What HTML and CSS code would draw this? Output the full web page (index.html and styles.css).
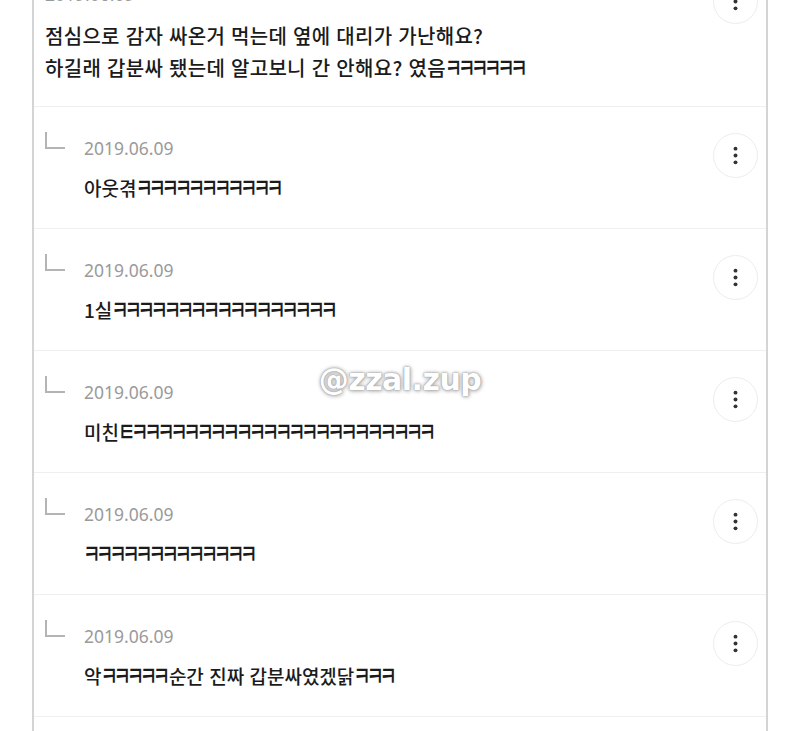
FILE: index.html
```html
<!DOCTYPE html>
<html lang="ko">
<head>
<meta charset="UTF-8" />
<meta name="viewport" content="width=device-width, initial-scale=1" />
<title>댓글</title>
<link rel="stylesheet" href="styles.css">
</head>
<body>

<div class="comments">
  <div class="row parent">
    <div class="body">
      <div class="date">2019.06.09</div>
      <p class="text big">점심으로 감자 싸온거 먹는데 옆에 대리가 가난해요?<br>하길래 갑분싸 됐는데 알고보니 간 안해요? 였음<span class="k">ㅋㅋㅋㅋㅋㅋ</span></p>
    </div>
    <button class="more"><svg viewBox="0 0 44 44"><circle cx="22" cy="15" r="2"/><circle cx="22" cy="22" r="2"/><circle cx="22" cy="29" r="2"/></svg></button>
  </div>

  <div class="row reply">
    <svg class="corner" viewBox="0 0 20 18"><path d="M1 0 V16 H20"/></svg>
    <div class="body">
      <div class="date">2019.06.09</div>
      <p class="text">아웃겪<span class="k">ㅋㅋㅋㅋㅋㅋㅋㅋㅋㅋㅋ</span></p>
    </div>
    <button class="more"><svg viewBox="0 0 44 44"><circle cx="22" cy="15" r="2"/><circle cx="22" cy="22" r="2"/><circle cx="22" cy="29" r="2"/></svg></button>
  </div>

  <div class="row reply">
    <svg class="corner" viewBox="0 0 20 18"><path d="M1 0 V16 H20"/></svg>
    <div class="body">
      <div class="date">2019.06.09</div>
      <p class="text">1실<span class="k">ㅋㅋㅋㅋㅋㅋㅋㅋㅋㅋㅋㅋㅋㅋㅋㅋㅋ</span></p>
    </div>
    <button class="more"><svg viewBox="0 0 44 44"><circle cx="22" cy="15" r="2"/><circle cx="22" cy="22" r="2"/><circle cx="22" cy="29" r="2"/></svg></button>
  </div>

  <div class="row reply">
    <svg class="corner" viewBox="0 0 20 18"><path d="M1 0 V16 H20"/></svg>
    <div class="body">
      <div class="date">2019.06.09</div>
      <p class="text">미친<span class="k">ㅌㅋㅋㅋㅋㅋㅋㅋㅋㅋㅋㅋㅋㅋㅋㅋㅋㅋㅋㅋㅋㅋㅋㅋ</span></p>
    </div>
    <button class="more"><svg viewBox="0 0 44 44"><circle cx="22" cy="15" r="2"/><circle cx="22" cy="22" r="2"/><circle cx="22" cy="29" r="2"/></svg></button>
  </div>

  <div class="row reply">
    <svg class="corner" viewBox="0 0 20 18"><path d="M1 0 V16 H20"/></svg>
    <div class="body">
      <div class="date">2019.06.09</div>
      <p class="text"><span class="k">ㅋㅋㅋㅋㅋㅋㅋㅋㅋㅋㅋㅋㅋ</span></p>
    </div>
    <button class="more"><svg viewBox="0 0 44 44"><circle cx="22" cy="15" r="2"/><circle cx="22" cy="22" r="2"/><circle cx="22" cy="29" r="2"/></svg></button>
  </div>

  <div class="row reply">
    <svg class="corner" viewBox="0 0 20 18"><path d="M1 0 V16 H20"/></svg>
    <div class="body">
      <div class="date">2019.06.09</div>
      <p class="text">악<span class="k">ㅋㅋㅋㅋㅋ</span>순간 진짜 갑분싸였겠닭<span class="k">ㅋㅋㅋ</span></p>
    </div>
    <button class="more"><svg viewBox="0 0 44 44"><circle cx="22" cy="15" r="2"/><circle cx="22" cy="22" r="2"/><circle cx="22" cy="29" r="2"/></svg></button>
  </div>

  <div class="row reply"></div>
</div>

<div class="watermark">@zzal.zup</div>

</body>
</html>
```

FILE: styles.css
```css
html, body {
  margin: 0;
  padding: 0;
  background: #fff;
  overflow: hidden;
}
body {
  position: relative;
  height: 731px;
  font-family: "Noto Sans CJK KR", "Noto Sans", sans-serif;
  color: #1b1b1b;
}
.comments {
  margin: -48px 32px 0 32px;
  border-left: 2px solid #d4d4d4;
  border-right: 2px solid #d4d4d4;
  background: #fff;
}
.row {
  display: flex;
  align-items: flex-start;
  box-sizing: border-box;
  border-bottom: 1px solid #efefef;
  padding-right: 8px;
}
.parent {
  height: 155px;
  padding-top: 26px;
  padding-left: 11px;
}
.reply {
  height: 122px;
  padding-top: 25px;
  padding-left: 11px;
}
.corner {
  width: 20px;
  height: 18px;
  margin-right: 19px;
  flex: none;
  fill: none;
  stroke: #b4b4b4;
  stroke-width: 2;
}
.body {
  flex: 1;
  padding-top: 6px;
}
.date {
  font-family: "Noto Sans", sans-serif;
  font-size: 17.5px;
  line-height: 20px;
  color: #9a9a9a;
}
.text {
  margin: 17px 0 0;
  font-size: 19px;
  line-height: 26px;
  font-weight: 500;
}
.text.big {
  margin-top: 16px;
  font-size: 20px;
  line-height: 32px;
  letter-spacing: 0.3px;
}
/* ㅋ runs: narrower, taller jamo like the app font */
.k {
  display: inline-block;
  font-size: 19px;
  letter-spacing: -4.4px;
  margin: 0 3px 0 -1px;
  transform: scaleY(1.45);
  transform-origin: 50% 62%;
}
.more {
  width: 45px;
  height: 45px;
  margin-top: 1px;
  padding: 0;
  flex: none;
  border: 1.5px solid #ededed;
  border-radius: 50%;
  background: #fff;
}
.more svg {
  display: block;
  width: 100%;
  height: 100%;
  fill: #333;
}
.watermark {
  position: absolute;
  left: 0;
  right: 0;
  top: 362px;
  text-align: center;
  font-family: "DejaVu Sans", sans-serif;
  font-weight: 700;
  font-size: 30px;
  line-height: 36px;
  color: #fff;
  letter-spacing: -0.5px;
  text-shadow: 0 0 1px #999, 0 0 2px #aaa, 0 0 4px #bbb, 1px 1px 4px #bbb;
}
```
